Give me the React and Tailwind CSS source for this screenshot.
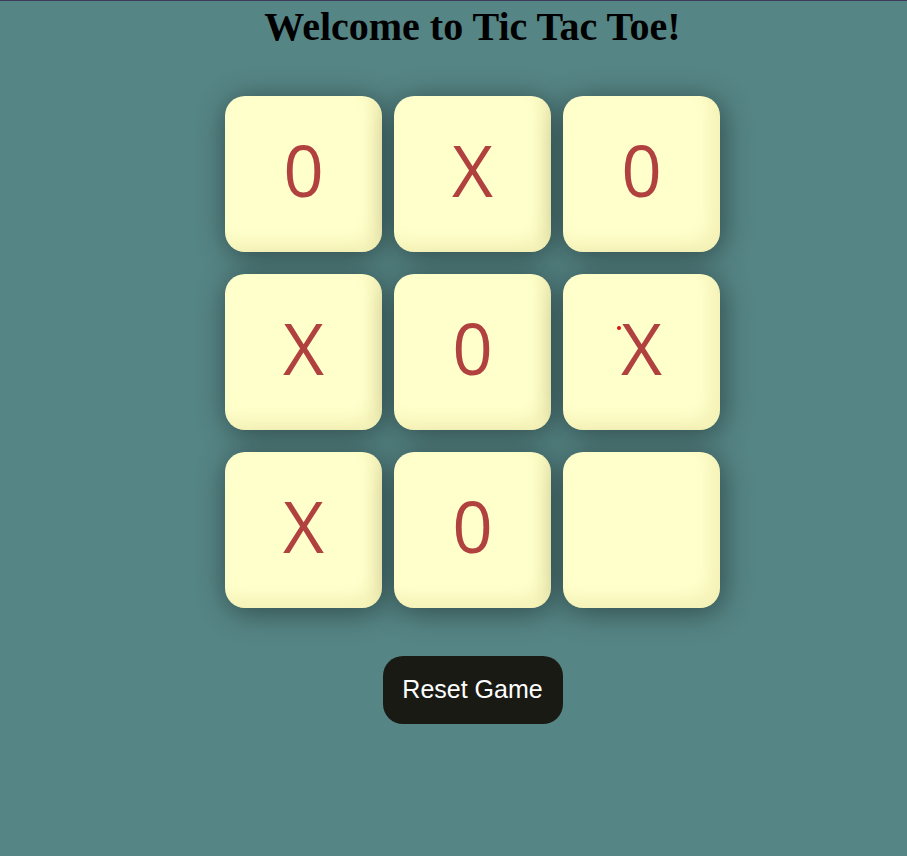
import React from "react";

const BOARD = ["0", "X", "0", "X", "0", "X", "X", "0", ""];

function Cell({ value, dot }) {
    return (
        <div className="relative w-[157px] h-[156px] rounded-[20px] bg-[#ffffcc] flex items-center justify-center pb-[10px] shadow-[2px_4px_30px_rgba(0,0,0,0.45),inset_-10px_-10px_16px_rgba(200,190,100,0.2)]">
            <span className="text-[#b0413e] text-[71px] leading-none font-['Open_Sans',sans-serif]">
                {value}
            </span>
            {dot && (
                <span className="absolute left-[54px] top-[52px] w-[4px] h-[4px] rounded-full bg-[#e01010]" />
            )}
        </div>
    );
}

class App extends React.Component {
    render() {
        return (
            <div className="min-h-[856px] bg-[#568585] border-t border-[#3e3a5a] pl-[38px] flex flex-col items-center">
                <h1 className="mt-[4px] text-[40px] leading-[44px] font-bold text-black font-['Liberation_Serif',serif]">
                    Welcome to Tic Tac Toe!
                </h1>
                <div className="mt-[47px] grid grid-cols-[157px_157px_157px] gap-x-[12px] gap-y-[22px]">
                    {BOARD.map((v, i) => (
                        <Cell key={i} value={v} dot={i === 5} />
                    ))}
                </div>
                <button className="mt-[48px] w-[180px] h-[68px] rounded-[20px] bg-[#1a1a14] text-white text-[25px] font-['Liberation_Sans',sans-serif]">
                    Reset Game
                </button>
            </div>
        );
    }
}

export default App;
